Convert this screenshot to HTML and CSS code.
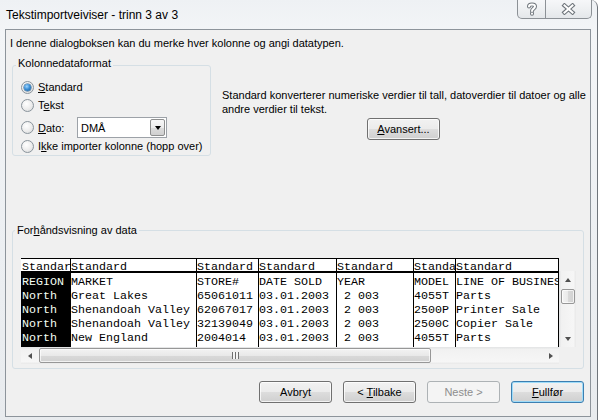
FILE: index.html
```html
<!DOCTYPE html>
<html lang="no">
<head>
<meta charset="utf-8">
<title>Tekstimportveiviser - trinn 3 av 3</title>
<link rel="stylesheet" href="styles.css">
</head>
<body>
<div class="window">
  <div class="titlebar">
    <div class="title">Tekstimportveiviser - trinn 3 av 3</div>
    <div class="caption-buttons">
      <div class="cap-btn help">
        <svg width="14" height="14" viewBox="0 0 14 14">
          <path d="M4 4.5 C4 1.8 10 1.8 10 4.5 C10 6.6 7 6.6 7 9" fill="none" stroke="#70767c" stroke-width="4" stroke-linecap="round"/>
          <path d="M7 11.6 L7 11.8" fill="none" stroke="#70767c" stroke-width="4" stroke-linecap="round"/>
          <path d="M4 4.5 C4 1.8 10 1.8 10 4.5 C10 6.6 7 6.6 7 9" fill="none" stroke="#ffffff" stroke-width="2" stroke-linecap="round"/>
          <path d="M7 11.6 L7 11.8" fill="none" stroke="#ffffff" stroke-width="2" stroke-linecap="round"/>
        </svg>
      </div>
      <div class="cap-btn close">
        <svg width="15" height="12" viewBox="0 0 15 12">
          <path d="M3.5 2.5 L11.5 9.5 M11.5 2.5 L3.5 9.5" fill="none" stroke="#70767c" stroke-width="4.2" stroke-linecap="square"/>
          <path d="M3.5 2.5 L11.5 9.5 M11.5 2.5 L3.5 9.5" fill="none" stroke="#ffffff" stroke-width="2" stroke-linecap="square"/>
        </svg>
      </div>
    </div>
  </div>

  <div class="client">
    <p class="intro">I denne dialogboksen kan du merke hver kolonne og angi datatypen.</p>

    <div class="format-row">
      <fieldset class="group format">
        <legend>Kolonnedataformat</legend>
        <div class="opts">
          <div class="opt"><span class="radio checked"></span><span><u>S</u>tandard</span></div>
          <div class="opt"><span class="radio"></span><span>T<u>e</u>kst</span></div>
          <div class="opt date">
            <span class="radio"></span><span class="date-label"><u>D</u>ato:</span>
            <div class="select"><span class="val">DMÅ</span><span class="drop-btn"><span class="tri-down"></span></span></div>
          </div>
          <div class="opt skip"><span class="radio"></span><span>I<u>k</u>ke importer kolonne (hopp over)</span></div>
        </div>
      </fieldset>
      <div class="desc">
        <p>Standard konverterer numeriske verdier til tall, datoverdier til datoer og alle<br>andre verdier til tekst.</p>
        <button class="btn"><u>A</u>vansert...</button>
      </div>
    </div>

    <fieldset class="group preview">
      <legend>For<u>h</u>åndsvisning av data</legend>
      <div class="pgrid">
        <div class="table">
          <div class="col c1">
            <div class="hcell">Standard</div>
            <div class="cells"><div class="cell">REGION</div><div class="cell">North</div><div class="cell">North</div><div class="cell">North</div><div class="cell">North</div></div>
          </div>
          <div class="col c2">
            <div class="hcell">Standard</div>
            <div class="cells"><div class="cell">MARKET</div><div class="cell">Great Lakes</div><div class="cell">Shenandoah Valley</div><div class="cell">Shenandoah Valley</div><div class="cell">New England</div></div>
          </div>
          <div class="col c3">
            <div class="hcell">Standard</div>
            <div class="cells"><div class="cell">STORE#</div><div class="cell">65061011</div><div class="cell">62067017</div><div class="cell">32139049</div><div class="cell">2004014</div></div>
          </div>
          <div class="col c4">
            <div class="hcell">Standard</div>
            <div class="cells"><div class="cell">DATE SOLD</div><div class="cell">03.01.2003</div><div class="cell">03.01.2003</div><div class="cell">03.01.2003</div><div class="cell">03.01.2003</div></div>
          </div>
          <div class="col c5">
            <div class="hcell">Standard</div>
            <div class="cells"><div class="cell">YEAR</div><div class="cell"> 2 003</div><div class="cell"> 2 003</div><div class="cell"> 2 003</div><div class="cell"> 2 003</div></div>
          </div>
          <div class="col c6">
            <div class="hcell">Standard</div>
            <div class="cells"><div class="cell">MODEL</div><div class="cell">4055T</div><div class="cell">2500P</div><div class="cell">2500C</div><div class="cell">4055T</div></div>
          </div>
          <div class="col c7">
            <div class="hcell">Standard</div>
            <div class="cells"><div class="cell">LINE OF BUSINESS</div><div class="cell">Parts</div><div class="cell">Printer Sale</div><div class="cell">Copier Sale</div><div class="cell">Parts</div></div>
          </div>
        </div>
        <div class="vscroll">
          <div class="sb-arrow"><span class="tri-up"></span></div>
          <div class="vthumb"></div>
          <div class="sb-fill"></div>
          <div class="sb-arrow"><span class="tri-down small"></span></div>
        </div>
        <div class="hscroll">
          <div class="sb-arrow"><span class="tri-left"></span></div>
          <div class="hthumb"><span class="grip"></span></div>
          <div class="sb-fill"></div>
          <div class="sb-arrow"><span class="tri-right"></span></div>
        </div>
        <div class="corner"></div>
      </div>
    </fieldset>

    <div class="buttons">
      <button class="btn">Avbryt</button>
      <button class="btn">&lt; <u>T</u>ilbake</button>
      <button class="btn disabled">Neste &gt;</button>
      <button class="btn default"><u>F</u>ullfør</button>
    </div>
  </div>
</div>
</body>
</html>
```

FILE: styles.css
```css
* { box-sizing: border-box; }
html, body { margin: 0; padding: 0; }
body {
  width: 600px;
  height: 420px;
  overflow: hidden;
  background: #ffffff;
  font-family: "Liberation Sans", Arial, sans-serif;
  font-size: 11px;
  color: #000;
}

.window {
  width: 598px;
  height: 420px;
  border-right: 1px solid #6f757b;
  border-top-right-radius: 7px;
  background: linear-gradient(180deg, #eef1f4 0%, #f3f5f7 8%, #eceff2 60%, #e8ebee 100%);
  display: flex;
  flex-direction: column;
}

.titlebar {
  height: 29px;
  flex: none;
  display: flex;
  align-items: flex-start;
  padding: 0 5px 0 6px;
}
.title {
  padding-top: 8px;
  line-height: 14px;
  font-size: 12px;
  color: #000;
}
.caption-buttons {
  margin-left: auto;
  display: flex;
  height: 19px;
  border: 1px solid #8c9196;
  border-top: none;
  border-radius: 0 0 5px 5px;
  overflow: hidden;
  background: linear-gradient(180deg, #f6f7f9 0%, #eef0f2 50%, #e4e7ea 100%);
}
.cap-btn {
  height: 18px;
  display: flex;
  align-items: center;
  justify-content: center;
}
.help { width: 28px; border-right: 1px solid #8c9196; }
.close { width: 45px; }

.client {
  margin: 0 6px 0 5px;
  height: 388px;
  flex: none;
  border: 1px solid #8d949b;
  background: #f0f0f0;
  display: flex;
  flex-direction: column;
}

.intro {
  margin: 6px 0 0 4px;
  line-height: 14px;
}

.format-row {
  display: flex;
  align-items: flex-start;
  margin: 6px 0 0 6px;
}

.group {
  min-width: 0;
  border: 1px solid #d5dfe5;
  border-radius: 3px;
}
.group > legend {
  line-height: 14px;
}

.format {
  width: 199px;
  margin: 0;
  padding: 0;
}
.format > legend {
  margin-left: 3px;
  padding: 0 2px 4px;
}

.opts {
  display: flex;
  flex-direction: column;
  padding: 6px 0 2px 8px;
}
.opt {
  display: flex;
  align-items: center;
  height: 14px;
  line-height: 14px;
  white-space: nowrap;
}
.opt + .opt { margin-top: 4px; }
.opt.date { height: 21px; margin-top: 5px; }
.opt.skip { margin-top: 1px; }

.radio {
  flex: none;
  width: 13px;
  height: 13px;
  margin-right: 4px;
  border-radius: 50%;
  border: 1px solid #8a949c;
  background: radial-gradient(circle at 40% 35%, #ffffff 0%, #ececec 55%, #d2d4d6 100%);
  display: flex;
  align-items: center;
  justify-content: center;
}
.radio.checked::after {
  content: "";
  width: 7px;
  height: 7px;
  border-radius: 50%;
  background: radial-gradient(circle at 40% 35%, #9fd6ff 0%, #3b8fd6 45%, #14558f 100%);
  box-shadow: 0 0 0 0.5px #2a5d89;
}

.date-label { width: 39px; }
.select {
  width: 90px;
  height: 21px;
  border: 1px solid #9da2a8;
  background: #fff;
  display: flex;
  align-items: center;
  padding-left: 3px;
}
.select .val { flex: 1; line-height: 14px; }
.drop-btn {
  width: 15px;
  height: 17px;
  margin-right: 1px;
  border: 1px solid #8e8f8f;
  border-radius: 2px;
  background: linear-gradient(180deg, #f7f7f7 0%, #ececec 50%, #dcdcdc 51%, #d0d0d0 100%);
  display: flex;
  align-items: center;
  justify-content: center;
}
.tri-down {
  width: 0;
  height: 0;
  border-left: 3.5px solid transparent;
  border-right: 3.5px solid transparent;
  border-top: 4px solid #000;
}
.tri-down.small { border-top-color: #505050; }
.tri-up {
  width: 0;
  height: 0;
  border-left: 3.5px solid transparent;
  border-right: 3.5px solid transparent;
  border-bottom: 4px solid #505050;
}
.tri-left {
  width: 0;
  height: 0;
  border-top: 3.5px solid transparent;
  border-bottom: 3.5px solid transparent;
  border-right: 4px solid #505050;
}
.tri-right {
  width: 0;
  height: 0;
  border-top: 3.5px solid transparent;
  border-bottom: 3.5px solid transparent;
  border-left: 4px solid #505050;
}

.desc {
  width: 363px;
  margin-left: 11px;
  padding-top: 33px;
  display: flex;
  flex-direction: column;
  align-items: center;
}
.desc p {
  margin: 0;
  align-self: stretch;
  line-height: 13.5px;
  white-space: nowrap;
}
.desc .btn { margin-top: 2px; }

.btn {
  width: 73px;
  height: 22px;
  padding: 0;
  font-family: inherit;
  font-size: 11px;
  color: #000;
  border: 1px solid #707070;
  border-radius: 3px;
  background: linear-gradient(180deg, #f2f2f2 0%, #ebebeb 50%, #dddddd 51%, #cfcfcf 100%);
  box-shadow: inset 0 0 0 1px rgba(255, 255, 255, 0.75);
}
.btn.default {
  border-color: #3c7fb1;
  box-shadow: inset 0 0 0 1px #9fdcf9;
}
.btn.disabled {
  border-color: #adb2b5;
  background: #f4f4f4;
  color: #8d8d8d;
  box-shadow: none;
}

.preview {
  width: 572px;
  margin: 67px 0 0 6px;
  padding: 21px 0 4px 8px;
}
.preview > legend {
  margin-left: -6px;
  padding: 0 2px;
}

.pgrid {
  display: grid;
  grid-template-columns: 538px 17px;
  grid-template-rows: 89px 17px;
}

.table {
  display: flex;
  height: 89px;
  border-top: 1px solid #000;
  border-right: 1px solid #000;
  background: #fff;
  overflow: hidden;
  font-family: "Liberation Mono", "Courier New", monospace;
  font-size: 11.67px;
}
.col {
  flex: none;
  display: flex;
  flex-direction: column;
  border-left: 1px solid #000;
  overflow: hidden;
}
.c1 { width: 49px; border-left: none; }
.c2 { width: 126px; }
.c3 { width: 62px; }
.c4 { width: 78px; }
.c5 { width: 77px; }
.c6 { width: 42px; }
.c7 { width: 103px; }
.hcell {
  height: 14px;
  line-height: 16px;
  white-space: pre;
  overflow: hidden;
  border-bottom: 2px solid #000;
}
.cells {
  flex: 1;
  padding-top: 2px;
}
.cell {
  height: 14px;
  line-height: 14px;
  white-space: pre;
  overflow: hidden;
}
.c1 .hcell, .c1 .cell { padding-left: 1px; }
.c1 .cells { background: #000; color: #f4fff4; }

.vscroll {
  margin-top: 13px;
  display: flex;
  flex-direction: column;
  background: linear-gradient(90deg, #e2e3e4 0%, #f1f1f1 15%, #f6f6f6 85%, #e8e8e8 100%);
}
.hscroll {
  display: flex;
  background: linear-gradient(180deg, #e2e3e4 0%, #f1f1f1 15%, #f6f6f6 85%, #e8e8e8 100%);
}
.corner { background: #f0f0f0; }
.sb-arrow {
  flex: none;
  width: 17px;
  height: 17px;
  display: flex;
  align-items: center;
  justify-content: center;
}
.sb-fill { flex: 1; }
.vthumb {
  flex: none;
  width: 14px;
  height: 15px;
  margin: 1px 0 0 2px;
  border: 1px solid #979797;
  border-radius: 2px;
  background: linear-gradient(90deg, #f3f3f3 0%, #e9e9e9 50%, #d9d9d9 51%, #d1d1d1 100%);
  box-shadow: inset 0 0 0 1px rgba(255, 255, 255, 0.7);
}
.hthumb {
  flex: none;
  width: 392px;
  height: 15px;
  margin: 1px 0 0 1px;
  border: 1px solid #979797;
  border-radius: 2px;
  background: linear-gradient(180deg, #f3f3f3 0%, #e9e9e9 50%, #d9d9d9 51%, #d1d1d1 100%);
  box-shadow: inset 0 0 0 1px rgba(255, 255, 255, 0.7);
  display: flex;
  align-items: center;
  justify-content: center;
}
.grip {
  width: 7px;
  height: 7px;
  background: repeating-linear-gradient(90deg, #6e6e6e 0, #6e6e6e 1px, #f4f4f4 1px, #f4f4f4 3px);
}

.buttons {
  display: flex;
  justify-content: flex-end;
  gap: 11px;
  margin: 12px 6px 0 0;
}
```
